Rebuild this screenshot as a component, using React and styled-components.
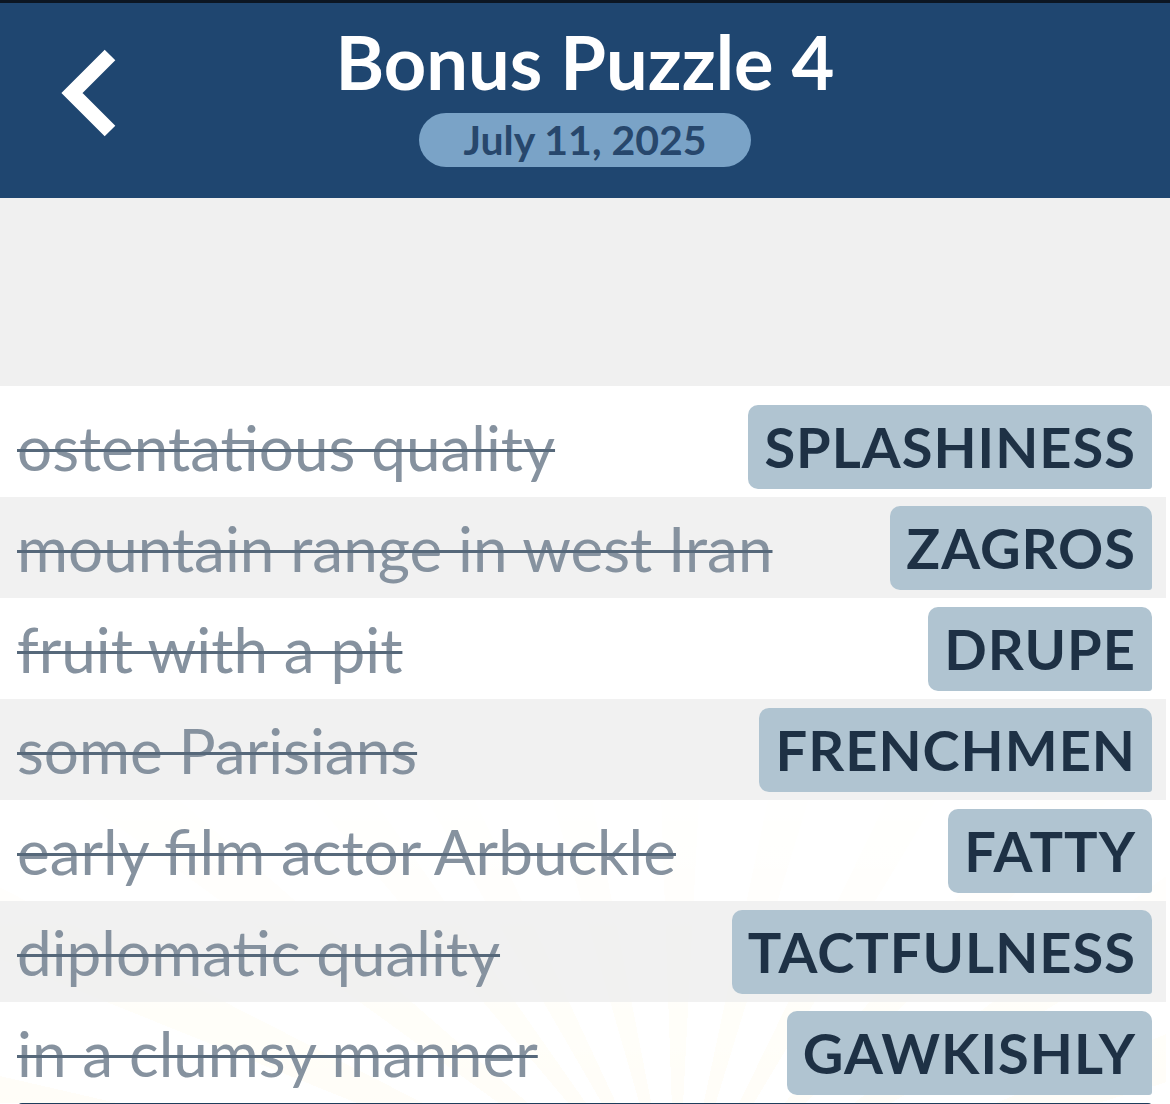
import React from 'react';
import styled, { createGlobalStyle } from 'styled-components';

const GlobalStyle = createGlobalStyle`
body {
  margin: 0;
  background: #ffffff;
  font-family: Lato, "Open Sans", sans-serif;
}
`;

const Page = styled.div`
display: flex;
flex-direction: column;
width: 1170px;
height: 1104px;
overflow: hidden;
border-top: 3px solid #0c1622;
box-sizing: border-box;
& > * {
  flex-shrink: 0;
}
`;

const Header = styled.div`
display: grid;
grid-template-columns: 150px 1fr 150px;
height: 195px;
background: #1f4670;
`;

const BackButton = styled.div`
display: flex;
align-items: center;
padding: 0 0 4px 54px;
cursor: pointer;
`;

const TitleBlock = styled.div`
display: flex;
flex-direction: column;
align-items: center;
padding-top: 17px;
`;

const Title = styled.div`
font-size: 74px;
font-weight: 700;
line-height: 84px;
color: #ffffff;
`;

const DatePill = styled.div`
margin-top: 9px;
padding: 0 44px;
height: 54px;
border-radius: 27px;
background: #7aa3c7;
color: #27476c;
font-size: 41px;
font-weight: 700;
line-height: 54px;
`;

const Spacer = styled.div`
height: 188px;
background: #f0f0f0;
`;

const List = styled.div`
display: flex;
flex-direction: column;
margin-right: 4px;
padding-top: 10px;
background:
  linear-gradient(to bottom, #ffffff 0%, #ffffff 50%, rgba(255, 255, 255, 0.4) 100%),
  repeating-conic-gradient(from -30deg at 58% 118%, #fff3cc 0deg 5deg, #ffffff 5deg 14deg);
`;

const Row = styled.div`
display: flex;
align-items: center;
justify-content: space-between;
height: 101px;
padding: 0 14px 0 17px;
background: ${p => (p.$shaded ? 'rgba(240, 240, 240, 0.94)' : 'rgba(255, 255, 255, 0.75)')};
`;

const Clue = styled.div`
font-size: 62px;
color: #86929f;
white-space: nowrap;
text-decoration: line-through;
text-decoration-color: #56687a;
text-decoration-thickness: 3px;
`;

const Answer = styled.div`
display: flex;
align-items: center;
height: 84px;
padding: 0 16px;
border-radius: 10px 10px 3px 10px;
background: #b0c4d1;
color: #1e3145;
font-size: 56px;
font-weight: 700;
letter-spacing: 1px;
`;

const Footer = styled.div`
margin: 0 18px;
height: 6px;
border-radius: 4px 4px 0 0;
background: #1f3d5c;
`;

const Chevron = () => (
  <svg width="70" height="100" viewBox="0 0 70 100">
    <polyline
      points="56,6 18,44 56,82"
      fill="none"
      stroke="#ffffff"
      strokeWidth="15"
      strokeLinejoin="miter"
    />
  </svg>
);

const rows = [
  ['ostentatious quality', 'SPLASHINESS'],
  ['mountain range in west Iran', 'ZAGROS'],
  ['fruit with a pit', 'DRUPE'],
  ['some Parisians', 'FRENCHMEN'],
  ['early film actor Arbuckle', 'FATTY'],
  ['diplomatic quality', 'TACTFULNESS'],
  ['in a clumsy manner', 'GAWKISHLY'],
];

export default function App() {
  return (
    <>
      <GlobalStyle />
      <Page>
        <Header>
          <BackButton>
            <Chevron />
          </BackButton>
          <TitleBlock>
            <Title>Bonus Puzzle 4</Title>
            <DatePill>July 11, 2025</DatePill>
          </TitleBlock>
          <div />
        </Header>
        <Spacer />
        <List>
          {rows.map(([clue, answer], i) => (
            <Row key={answer} $shaded={i % 2 === 1}>
              <Clue>{clue}</Clue>
              <Answer>{answer}</Answer>
            </Row>
          ))}
        </List>
        <Footer />
      </Page>
    </>
  );
}
